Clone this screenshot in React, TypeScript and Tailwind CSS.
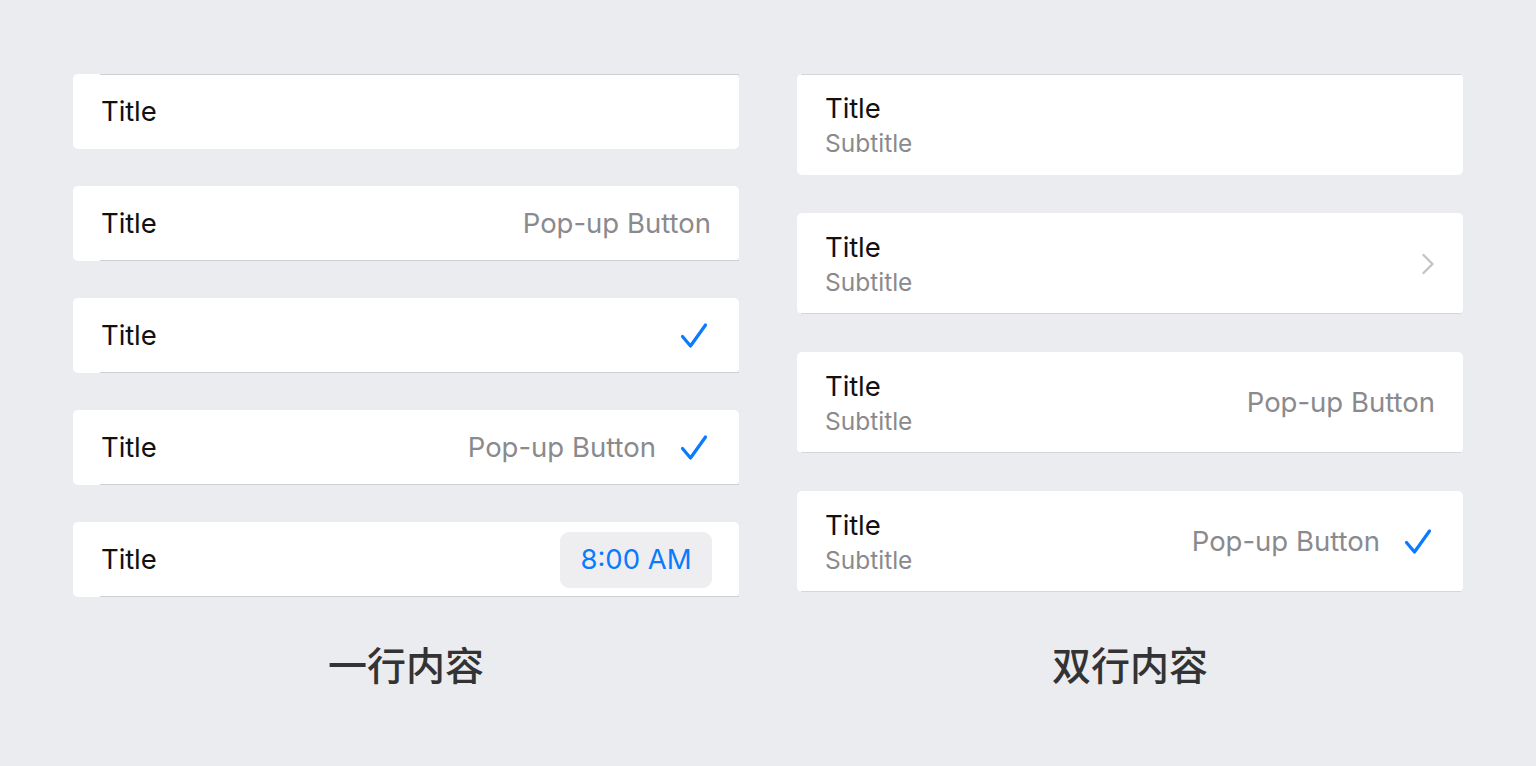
import React from "react";

const font = { fontFamily: 'Inter, "Noto Sans CJK SC", sans-serif' };

function Check({ className = "" }: { className?: string }) {
  return (
    <svg viewBox="0 0 28 28" className={className} fill="none">
      <path d="M2.5 14.5 L10.5 24 L25.5 3" stroke="#0a7aff" strokeWidth="3.2" strokeLinecap="round" strokeLinejoin="round" />
    </svg>
  );
}

function Chevron() {
  return (
    <svg viewBox="0 0 14 22" className="w-[14px] h-[22px]" fill="none">
      <path d="M2.5 2 L11.5 11 L2.5 20" stroke="#c4c4c7" strokeWidth="2.4" strokeLinecap="round" strokeLinejoin="round" />
    </svg>
  );
}

function SingleRow({ children, top = false }: { children?: React.ReactNode; top?: boolean }) {
  return (
    <div className="relative h-[75px] bg-white rounded-[5px] flex items-center pl-[28px] pr-[28px]">
      <span className="text-[27.5px] text-[#111] tracking-[-0.1px]">Title</span>
      <div className="ml-auto flex items-center">{children}</div>
      <div className={`absolute left-[27px] right-0 h-px bg-[#cfcfd4] ${top ? "top-0" : "bottom-0"}`} />
    </div>
  );
}

function DoubleRow({ children, top = false }: { children?: React.ReactNode; top?: boolean }) {
  return (
    <div className="relative h-[101px] bg-white rounded-[5px] flex items-center pl-[28px] pr-[28px]">
      <div className="flex flex-col pt-[3px]">
        <span className="text-[27.5px] leading-[35px] text-[#111] tracking-[-0.1px]">Title</span>
        <span className="text-[24.5px] leading-[35px] text-[#8a8a8e]">Subtitle</span>
      </div>
      <div className="ml-auto flex items-center">{children}</div>
      <div className={`absolute left-[4px] right-[2px] h-px bg-[#d6d6da] ${top ? "top-0" : "bottom-0"}`} />
    </div>
  );
}

const popup = <span className="text-[27.5px] text-[#8a8a8e]">Pop-up Button</span>;

export default function App() {
  return (
    <div className="w-[1536px] h-[766px] bg-[#ebecf0] flex gap-[58px] pl-[73px] pt-[74px]" style={font}>
      <div className="w-[666px] flex flex-col">
        <div className="flex flex-col gap-[37px]">
          <SingleRow top />
          <SingleRow>{popup}</SingleRow>
          <SingleRow>
            <Check className="w-[28px] h-[28px] mr-[3px]" />
          </SingleRow>
          <SingleRow>
            {popup}
            <Check className="w-[28px] h-[28px] ml-[24px] mr-[3px]" />
          </SingleRow>
          <SingleRow>
            <div className="h-[56px] w-[152px] rounded-[9px] bg-[#eeeef0] flex items-center justify-center text-[27.5px] text-[#0a7aff] -mr-[1px]">
              8:00 AM
            </div>
          </SingleRow>
        </div>
        <div className="mt-[40px] text-center text-[39px] font-medium text-[#333]">一行内容</div>
      </div>
      <div className="w-[666px] flex flex-col">
        <div className="flex flex-col gap-[38px]">
          <DoubleRow top />
          <DoubleRow>
            <Chevron />
          </DoubleRow>
          <DoubleRow>{popup}</DoubleRow>
          <DoubleRow>
            {popup}
            <Check className="w-[28px] h-[28px] ml-[24px] mr-[3px]" />
          </DoubleRow>
        </div>
        <div className="mt-[45px] text-center text-[39px] font-medium text-[#333]">双行内容</div>
      </div>
    </div>
  );
}
